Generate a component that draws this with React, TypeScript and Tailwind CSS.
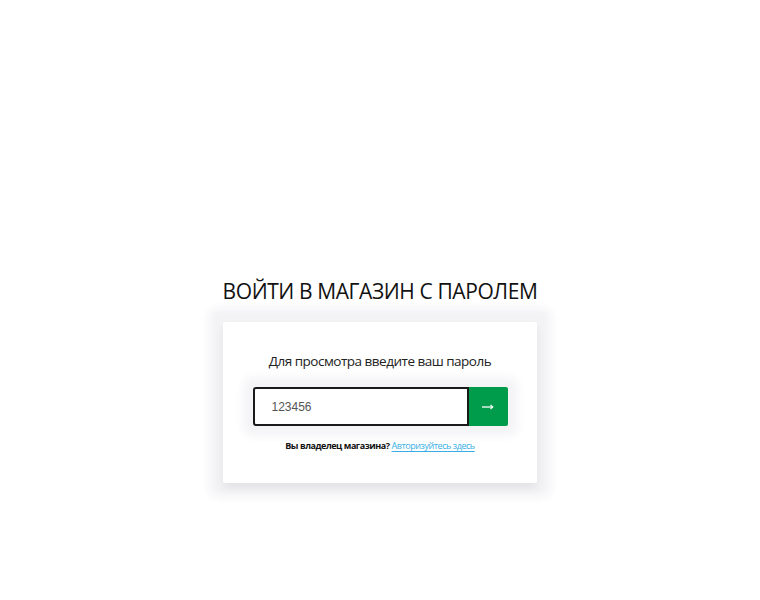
import React from "react";

export default function App() {
  return (
    <div className="w-[760px] h-[600px] bg-white flex flex-col items-center pt-[277px]" style={{ fontFamily: '"Open Sans", "Noto Sans", sans-serif' }}>
      <h1 className="text-[21px] leading-[28px] font-medium text-[#111] whitespace-nowrap tracking-[-0.4px]">ВОЙТИ В МАГАЗИН С ПАРОЛЕМ</h1>
      <div className="mt-[17px] w-[314px] bg-white rounded-[2px] shadow-[0_0_10px_14px_rgba(40,40,90,0.055),0_5px_10px_rgba(0,0,0,0.07)] flex flex-col items-center pt-[29px] pb-[30px] px-[30px]">
        <p className="text-[13.5px] leading-[20px] text-[#222] whitespace-nowrap tracking-[-0.5px]">Для просмотра введите ваш пароль</p>
        <div className="mt-[16px] flex w-[255px] h-[39px] rounded-[3px] shadow-[0_0_10px_10px_rgba(40,40,90,0.05)]">
          <div className="flex-1 border-2 border-[#1a1a1a] rounded-l-[3px] flex items-center pl-[17px] text-[12px] text-[#555]" style={{ fontFamily: '"Liberation Sans", Arial, sans-serif' }}>
            123456
          </div>
          <div className="w-[39px] h-full bg-[#009b4b] rounded-r-[2px] flex items-center justify-center">
            <svg width="12" height="8" viewBox="0 0 12 8" fill="none">
              <path d="M0 4h10.5" stroke="white" strokeWidth="1.3" />
              <path d="M8.5 2l2.3 2-2.3 2" stroke="white" strokeWidth="1.1" fill="none" />
            </svg>
          </div>
        </div>
        <p className="mt-[13px] text-[9px] leading-[14px] text-[#111] whitespace-nowrap tracking-[-0.45px]" style={{ fontFamily: '"Open Sans", "Noto Sans", sans-serif' }}>
          <span className="font-bold">Вы владелец магазина?</span>{" "}
          <span className="text-[#38aee3] font-medium underline underline-offset-2">Авторизуйтесь здесь</span>
        </p>
      </div>
    </div>
  );
}
